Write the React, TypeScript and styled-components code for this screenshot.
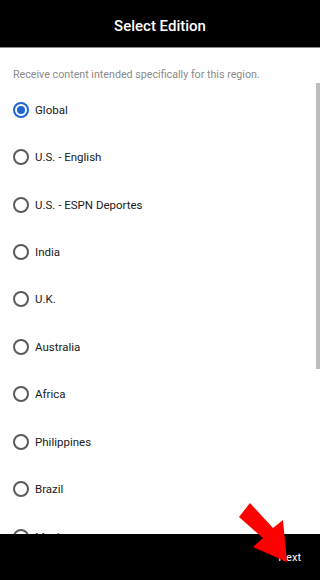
import React, { useState } from 'react'
import styled, { createGlobalStyle } from 'styled-components'

const GlobalStyle = createGlobalStyle`
  html, body {
    margin: 0;
    padding: 0;
    background: #fff;
  }
  body {
    font-family: Roboto, "Noto Sans", "Liberation Sans", sans-serif;
  }
`

const Screen = styled.div`
  position: relative;
  width: 320px;
  height: 580px;
  display: flex;
  flex-direction: column;
  overflow: hidden;
  background: #fff;
`

const Header = styled.div`
  height: 43px;
  padding-top: 4px;
  flex-shrink: 0;
  background: #000;
  border-bottom: 1px solid #8a8a8a;
  display: flex;
  align-items: center;
  justify-content: center;
  color: #fff;
  font-size: 15px;
  font-weight: 500;
`

const Body = styled.div`
  flex: 1;
  position: relative;
  overflow: hidden;
`

const Intro = styled.p`
  margin: 0;
  padding: 20px 0 0 13px;
  font-size: 10.7px;
  color: #8a8a8a;
  line-height: 14px;
`

const List = styled.div`
  display: flex;
  flex-direction: column;
  padding-top: 4px;
`

const Row = styled.label`
  height: 47.45px;
  display: flex;
  align-items: center;
  padding-left: 13px;
  gap: 6px;
  font-size: 11.5px;
  color: #202020;
  cursor: pointer;
`

const Circle = styled.span<{ checked: boolean }>`
  width: 12px;
  height: 12px;
  border-radius: 50%;
  border: 2px solid ${({ checked }) => (checked ? '#1f66d1' : '#5a5a5a')};
  display: flex;
  align-items: center;
  justify-content: center;
  flex-shrink: 0;

  &::after {
    content: '';
    width: 8px;
    height: 8px;
    border-radius: 50%;
    background: #1f66d1;
    display: ${({ checked }) => (checked ? 'block' : 'none')};
  }
`

const Scrollbar = styled.div`
  position: absolute;
  right: 0;
  top: 35px;
  width: 4px;
  height: 286px;
  background: #bdbdbd;
`

const Footer = styled.div`
  height: 46px;
  flex-shrink: 0;
  background: #000;
  display: flex;
  align-items: center;
  justify-content: flex-end;
  padding-right: 19px;
`

const NextButton = styled.button`
  background: none;
  border: none;
  color: #fff;
  font-family: inherit;
  font-size: 11px;
  padding: 0;
`

const Arrow = styled.svg`
  position: absolute;
  left: 236px;
  top: 500px;
  width: 60px;
  height: 66px;
  pointer-events: none;
`

const editions = [
  'Global',
  'U.S. - English',
  'U.S. - ESPN Deportes',
  'India',
  'U.K.',
  'Australia',
  'Africa',
  'Philippines',
  'Brazil',
  'Mexico',
]

export default function App() {
  const [selected, setSelected] = useState('Global')

  return (
    <Screen>
      <GlobalStyle />
      <Header>Select Edition</Header>
      <Body>
        <Intro>Receive content intended specifically for this region.</Intro>
        <List>
          {editions.map(name => (
            <Row key={name} onClick={() => setSelected(name)}>
              <Circle checked={selected === name} />
              {name}
            </Row>
          ))}
        </List>
        <Scrollbar />
      </Body>
      <Footer>
        <NextButton>Next</NextButton>
      </Footer>
      {/* pointer drawn over the screenshot */}
      <Arrow viewBox="0 0 60 66">
        <polygon points="3,17 14,3 37,28 47,20 51,62 17,47 27,38" fill="#f00" />
      </Arrow>
    </Screen>
  )
}
